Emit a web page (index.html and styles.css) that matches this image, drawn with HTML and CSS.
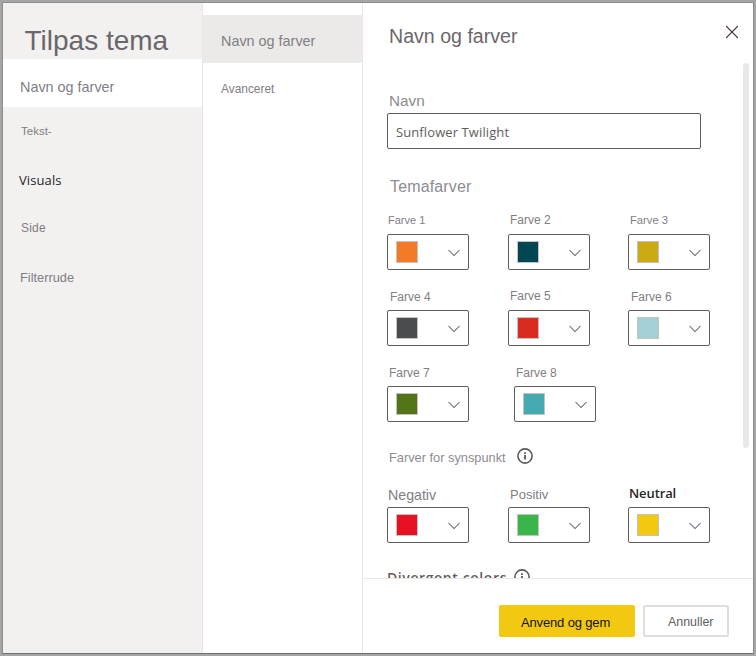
FILE: index.html
```html
<!DOCTYPE html>
<html lang="da">
<head>
<meta charset="utf-8">
<title>Tilpas tema</title>
<link rel="stylesheet" href="styles.css">
</head>
<body>
<svg class="defs" width="0" height="0" aria-hidden="true">
  <symbol id="chevron" viewBox="0 0 14 8"><path d="M1.5 1l5.5 5.5L12.5 1" fill="none" stroke="#5c6670" stroke-width="1.05"/></symbol>
  <symbol id="info" viewBox="0 0 16 16"><circle cx="8" cy="8" r="7.1" fill="none" stroke="#595959" stroke-width="1.6"/><path d="M8 7v4.6M8 4.3v1.7" fill="none" stroke="#595959" stroke-width="1.8"/></symbol>
</svg>
<div class="dialog">
  <nav class="sidebar">
    <h1 class="title">Tilpas tema</h1>
    <a class="nav-item active">Navn og farver</a>
    <a class="nav-item text">Tekst-</a>
    <a class="nav-item visuals">Visuals</a>
    <a class="nav-item page">Side</a>
    <a class="nav-item filter">Filterrude</a>
  </nav>
  <nav class="subnav">
    <a class="sub-item active">Navn og farver</a>
    <a class="sub-item">Avanceret</a>
  </nav>
  <main class="panel">
    <header class="panel-head">
      <h2>Navn og farver</h2>
      <svg class="close" viewBox="0 0 14 14"><path d="M1.2 1.2l11.6 11.6M12.8 1.2L1.2 12.8" fill="none" stroke="#3b2a3a" stroke-width="1.2"/></svg>
    </header>
    <div class="scroll">
      <div class="content">
        <div class="name-label">Navn</div>
        <div class="name-input">Sunflower Twilight</div>
        <div class="section">Temafarver</div>
        <div class="grid">
          <div class="field small"><label>Farve 1</label><div class="select"><i class="swatch orange"></i><svg><use href="#chevron"/></svg></div></div>
          <div class="field"><label>Farve 2</label><div class="select"><i class="swatch navy"></i><svg><use href="#chevron"/></svg></div></div>
          <div class="field small inset"><label>Farve 3</label><div class="select"><i class="swatch mustard"></i><svg><use href="#chevron"/></svg></div></div>
          <div class="field inset low"><label>Farve 4</label><div class="select"><i class="swatch graphite"></i><svg><use href="#chevron"/></svg></div></div>
          <div class="field"><label>Farve 5</label><div class="select"><i class="swatch red"></i><svg><use href="#chevron"/></svg></div></div>
          <div class="field inset low"><label>Farve 6</label><div class="select"><i class="swatch pale"></i><svg><use href="#chevron"/></svg></div></div>
          <div class="field low"><label>Farve 7</label><div class="select"><i class="swatch olive"></i><svg><use href="#chevron"/></svg></div></div>
          <div class="field low shifted"><label>Farve 8</label><div class="select"><i class="swatch teal"></i><svg><use href="#chevron"/></svg></div></div>
        </div>
        <div class="info-row sentiment"><span>Farver for synspunkt</span><svg><use href="#info"/></svg></div>
        <div class="grid">
          <div class="field negative"><label>Negativ</label><div class="select"><i class="swatch crimson"></i><svg><use href="#chevron"/></svg></div></div>
          <div class="field positive"><label>Positiv</label><div class="select"><i class="swatch green"></i><svg><use href="#chevron"/></svg></div></div>
          <div class="field neutral"><label>Neutral</label><div class="select"><i class="swatch yellow"></i><svg><use href="#chevron"/></svg></div></div>
        </div>
        <div class="info-row divergent"><span>Divergent colors</span><svg><use href="#info"/></svg></div>
      </div>
      <div class="scrollbar"></div>
    </div>
    <footer class="actions">
      <button class="apply">Anvend og gem</button>
      <button class="cancel">Annuller</button>
    </footer>
  </main>
</div>
</body>
</html>
```

FILE: styles.css
```css
* { box-sizing: border-box; }
body {
  margin: 0;
  padding: 2px;
  height: 656px;
  overflow: hidden;
  background: #a5a5a5;
  font-family: "Liberation Sans", Arial, sans-serif;
  color: #807e83;
}
.defs { display: block; position: absolute; }
.dialog {
  display: flex;
  width: 752px;
  height: 652px;
  border: 1px solid #8c8c8c;
  border-bottom-color: #707070;
  border-radius: 1px;
  background: #fff;
}

.sidebar { width: 200px; background: #f3f1f0; border-right: 1px solid #e8e7e6; }
.title {
  margin: 0;
  height: 56px;
  padding: 19px 0 0 21.5px;
  font-size: 28px;
  line-height: 37px;
  font-weight: 400;
  color: #69676b;
  white-space: nowrap;
}
.nav-item { display: block; height: 48px; line-height: 48px; padding-left: 18px; }
.nav-item.active { background: #fff; padding-left: 17px; padding-top: 4px; font-size: 14.4px; }
.nav-item.text { font-size: 11.5px; }
.nav-item.visuals { padding: 1px 0 0 16px; font: 13px/48px "Open Sans", sans-serif; letter-spacing: .1px; color: #252423; }
.nav-item.page { padding-top: 1px; font-size: 12px; letter-spacing: .2px; }
.nav-item.filter { padding: 3px 0 0 17px; font-size: 12.8px; }

.subnav { width: 160px; padding-top: 12px; border-right: 1px solid #e8e7e6; }
.sub-item { display: block; height: 48px; line-height: 52px; padding-left: 18px; font-size: 11.9px; }
.sub-item.active { background: #ebeae9; font-size: 14.4px; }

.panel { display: flex; flex-direction: column; width: 390px; }
.panel-head { display: flex; justify-content: space-between; height: 60px; padding: 22px 14px 0 26px; }
.panel-head h2 { margin: 0; font-size: 19.6px; line-height: 22px; font-weight: 400; color: #69676b; }
.close { width: 14px; height: 14px; }
.scroll { display: flex; justify-content: space-between; height: 515px; padding: 0 4px 0 24px; overflow: hidden; }
.content { width: 323px; }
.scrollbar { width: 6px; height: 385px; border-radius: 3px; background: #e8e8e8; }

.name-label { height: 50px; padding: 29px 0 0 2px; font-size: 15.3px; line-height: 18px; color: #8d8b91; }
.name-input {
  width: 314px;
  height: 36px;
  padding-left: 8px;
  border: 1px solid #605e5c;
  border-radius: 2px;
  font: 13px/36px "Open Sans", sans-serif;
  letter-spacing: .1px;
  color: #605e5c;
}
.section { height: 45px; padding: 30px 0 0 3px; font-size: 16px; line-height: 15px; letter-spacing: .15px; color: #8d8b91; }
.grid { display: grid; grid-template-columns: 121px 120px 82px; }
.field { width: 82px; }
.field label { display: block; height: 40px; padding: 18px 0 0 2px; font-size: 12px; line-height: 16px; white-space: nowrap; }
.field.inset label { padding-left: 3px; }
.field.low label { padding-top: 19px; }
.field.small label { padding-left: 2px; font-size: 11.2px; }
.field.small:first-child label { padding-left: 1px; font-size: 11px; }
.field.shifted { margin-left: 6px; }
.field.negative label { padding: 20px 0 0 1px; font-size: 14.2px; }
.field.positive label { padding: 20px 0 0 2px; font-size: 13px; }
.field.neutral label { padding: 18px 0 0 1px; font: 600 13px/17px "Open Sans", sans-serif; letter-spacing: -.1px; color: #252423; }
.select {
  display: flex;
  align-items: center;
  justify-content: space-between;
  height: 36px;
  padding: 0 7px 0 8px;
  border: 1px solid #605e5c;
  border-radius: 2px;
}
.select svg { width: 14px; height: 8px; margin-top: 2px; }
.swatch { width: 22px; height: 22px; border: 1px solid #c4c3c2; }
.orange { background: #f47b25; }
.navy { background: #004753; }
.mustard { background: #ccaa14; }
.graphite { background: #4b4c4e; }
.red { background: #d82c20; }
.pale { background: #a3d0d6; }
.olive { background: #537317; }
.teal { background: #46abb1; }
.crimson { background: #e81123; }
.green { background: #3bb44a; }
.yellow { background: #f2c811; }

.info-row { display: flex; }
.info-row svg { width: 16px; height: 16px; }
.sentiment { height: 45px; padding: 26px 0 0 2px; font-size: 12.8px; line-height: 19px; color: #8d8b91; }
.sentiment span { width: 128px; }
.divergent { padding-top: 26px; font: 600 14px/18px "Open Sans", sans-serif; letter-spacing: .6px; color: #605e5c; }
.divergent span { width: 127px; white-space: nowrap; }

.actions { display: flex; gap: 8px; height: 75px; padding: 26px 0 0 136px; border-top: 1px solid #e8e7e6; }
.actions button { height: 32px; padding: 0; border: 0; border-radius: 2px; font-family: inherit; text-align: left; }
.actions .apply { width: 136px; padding: 3px 0 0 22px; background: #f2c811; font-size: 13px; letter-spacing: -.15px; color: #141414; }
.actions .cancel { width: 86px; padding: 1px 0 0 23px; border: 2px solid #dedede; background: #fff; font-size: 12.4px; color: #605e5c; }
```
